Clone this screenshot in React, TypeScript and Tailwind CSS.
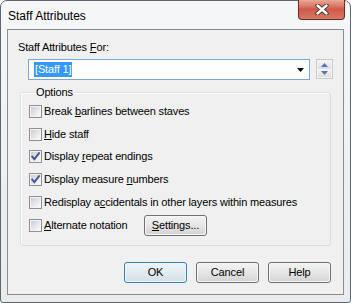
import React from "react";

function Check({ checked }: { checked?: boolean }) {
  return (
    <div className="w-[13px] h-[13px] shrink-0 border border-[#8e8f8f] bg-[#f4f4f4] p-[1px]">
      <div className="w-full h-full bg-gradient-to-br from-[#c9cdd3] via-[#e3e5e8] to-[#fafafa] relative">
        {checked && (
          <svg width="11" height="11" viewBox="0 0 11 11" className="absolute -left-[1px] -top-[1px]">
            <path d="M2.2 5.6 L4.4 8.2 L9 2.2" stroke="#44578f" strokeWidth="1.9" fill="none" strokeLinecap="square" strokeLinejoin="miter" />
          </svg>
        )}
      </div>
    </div>
  );
}

function Btn({ children, def }: { children: React.ReactNode; def?: boolean }) {
  return (
    <div
      className={
        def
          ? "w-[63px] h-[21px] rounded-[3px] border border-[#3c7fb1] p-[1px] bg-[#eaf6fd]"
          : "w-[63px] h-[21px] rounded-[3px] border border-[#707070] p-[1px] bg-[#f7f7f7]"
      }
    >
      <div
        className={
          def
            ? "w-full h-full rounded-[2px] flex flex-col bg-gradient-to-b from-[#eef4f8] via-[#e2ebf1] to-[#d5e0e8]"
            : "w-full h-full rounded-[2px] flex flex-col bg-gradient-to-b from-[#f2f2f2] via-[#e6e6e6] to-[#d4d4d4]"
        }
      >
        <div className="flex-1 flex items-center justify-center text-[11px] leading-[13px] text-black">{children}</div>
      </div>
    </div>
  );
}

const rows: { label: React.ReactNode; checked?: boolean; mt: string }[] = [
  { label: <>Break <u className="underline-offset-[1px]">b</u>arlines between staves</>, mt: "mt-0" },
  { label: <><u className="underline-offset-[1px]">H</u>ide staff</>, mt: "mt-[10px]" },
  { label: <>Display <u className="underline-offset-[1px]">r</u>epeat endings</>, checked: true, mt: "mt-[9px]" },
  { label: <>Display measure <u className="underline-offset-[1px]">n</u>umbers</>, checked: true, mt: "mt-[10px]" },
  { label: <>Redisplay a<u className="underline-offset-[1px]">c</u>cidentals in other layers within measures</>, mt: "mt-[10px]" },
];

export default function App() {
  return (
    <div className="w-[351px] h-[303px] font-['Liberation_Sans',Arial,sans-serif] tracking-[-0.15px] text-black">
      <div className="w-[351px] h-[303px] rounded-t-[7px] rounded-b-[3px] border border-[#5f6670] bg-gradient-to-b from-[#f6f7f8] via-[#eef0f2] to-[#e9ebed] flex flex-col">
        {/* Title bar */}
        <div className="h-[28px] flex items-start justify-between">
          <div className="pl-[7px] pt-[7px] text-[12px] leading-[16px] tracking-normal text-black">Staff Attributes</div>
          <div className="mr-[5px] -mt-[1px] w-[47px] h-[20px] rounded-b-[4px] border border-[#6e2a22] border-t-0 overflow-hidden bg-gradient-to-b from-[#e8a898] via-[#cf5a47] to-[#d67966] flex items-center justify-center">
            <svg width="14" height="11" viewBox="0 0 14 11">
              <path d="M2.5 1.5 L11.5 9.5 M11.5 1.5 L2.5 9.5" stroke="#3a2a2a" strokeWidth="4.2" strokeLinecap="round" />
              <path d="M2.5 1.5 L11.5 9.5 M11.5 1.5 L2.5 9.5" stroke="#ffffff" strokeWidth="2.4" strokeLinecap="round" />
            </svg>
          </div>
        </div>

        {/* Client area */}
        <div className="mx-[6px] h-[266px] border border-[#8c8c8c] bg-[#f0f0f0] flex flex-col">
          <div className="ml-[10px] mt-[11px] h-[13px] text-[11px] leading-[13px]">
            Staff Attributes <u className="underline-offset-[1px]">F</u>or:
          </div>

          <div className="mt-[5px] ml-[20px] flex items-start gap-[6px]">
            <div className="w-[282px] h-[21px] border border-[#7da7d4] bg-white flex items-center pl-[5px] pr-[3px]">
              <span className="bg-[#3399ff] text-white text-[11px] leading-[15px] px-[1px]">[Staff 1]</span>
              <div className="flex-1" />
              <svg width="7" height="4" viewBox="0 0 7 4" className="mr-[2px]">
                <path d="M0 0 H7 L3.5 4 Z" fill="#000" />
              </svg>
            </div>
            <div className="w-[17px] h-[20px] border border-[#c8c8c8] bg-[#f4f4f4] p-[1px] flex flex-col gap-[1px]">
              <div className="flex-1 bg-gradient-to-b from-[#f4f4f4] to-[#dcdcdc] flex items-center justify-center">
                <svg width="7" height="4" viewBox="0 0 7 4"><path d="M0 4 H7 L3.5 0 Z" fill="#5870c0" /></svg>
              </div>
              <div className="flex-1 bg-gradient-to-b from-[#f4f4f4] to-[#dcdcdc] flex items-center justify-center">
                <svg width="7" height="4" viewBox="0 0 7 4"><path d="M0 0 H7 L3.5 4 Z" fill="#5870c0" /></svg>
              </div>
            </div>
          </div>

          <fieldset className="mt-[6px] ml-[12px] w-[311px] h-[160px] border border-[#d5dfe5] rounded-[3px] pl-[8px] pt-[6px] shadow-[inset_1px_1px_0_#ffffff]">
            <legend className="ml-[5px] px-[2px] text-[11px] leading-[13px]">Options</legend>
            <div className="flex flex-col">
              {rows.map((r, i) => (
                <div key={i} className={"h-[13px] flex items-center " + r.mt}>
                  <Check checked={r.checked} />
                  <span className="ml-[2px] text-[11px] leading-[13px] whitespace-nowrap">{r.label}</span>
                </div>
              ))}
              <div className="h-[13px] flex items-center mt-[10px]">
                <Check />
                <span className="ml-[2px] w-[100px] text-[11px] leading-[13px] whitespace-nowrap">
                  <u className="underline-offset-[1px]">A</u>lternate notation
                </span>
                <Btn>
                  <u className="underline-offset-[1px]">S</u>ettings...
                </Btn>
              </div>
            </div>
          </fieldset>

          <div className="mt-[16px] pr-[12px] flex justify-end gap-[9px]">
            <Btn def>OK</Btn>
            <Btn>Cancel</Btn>
            <Btn>Help</Btn>
          </div>
        </div>
      </div>
    </div>
  );
}
